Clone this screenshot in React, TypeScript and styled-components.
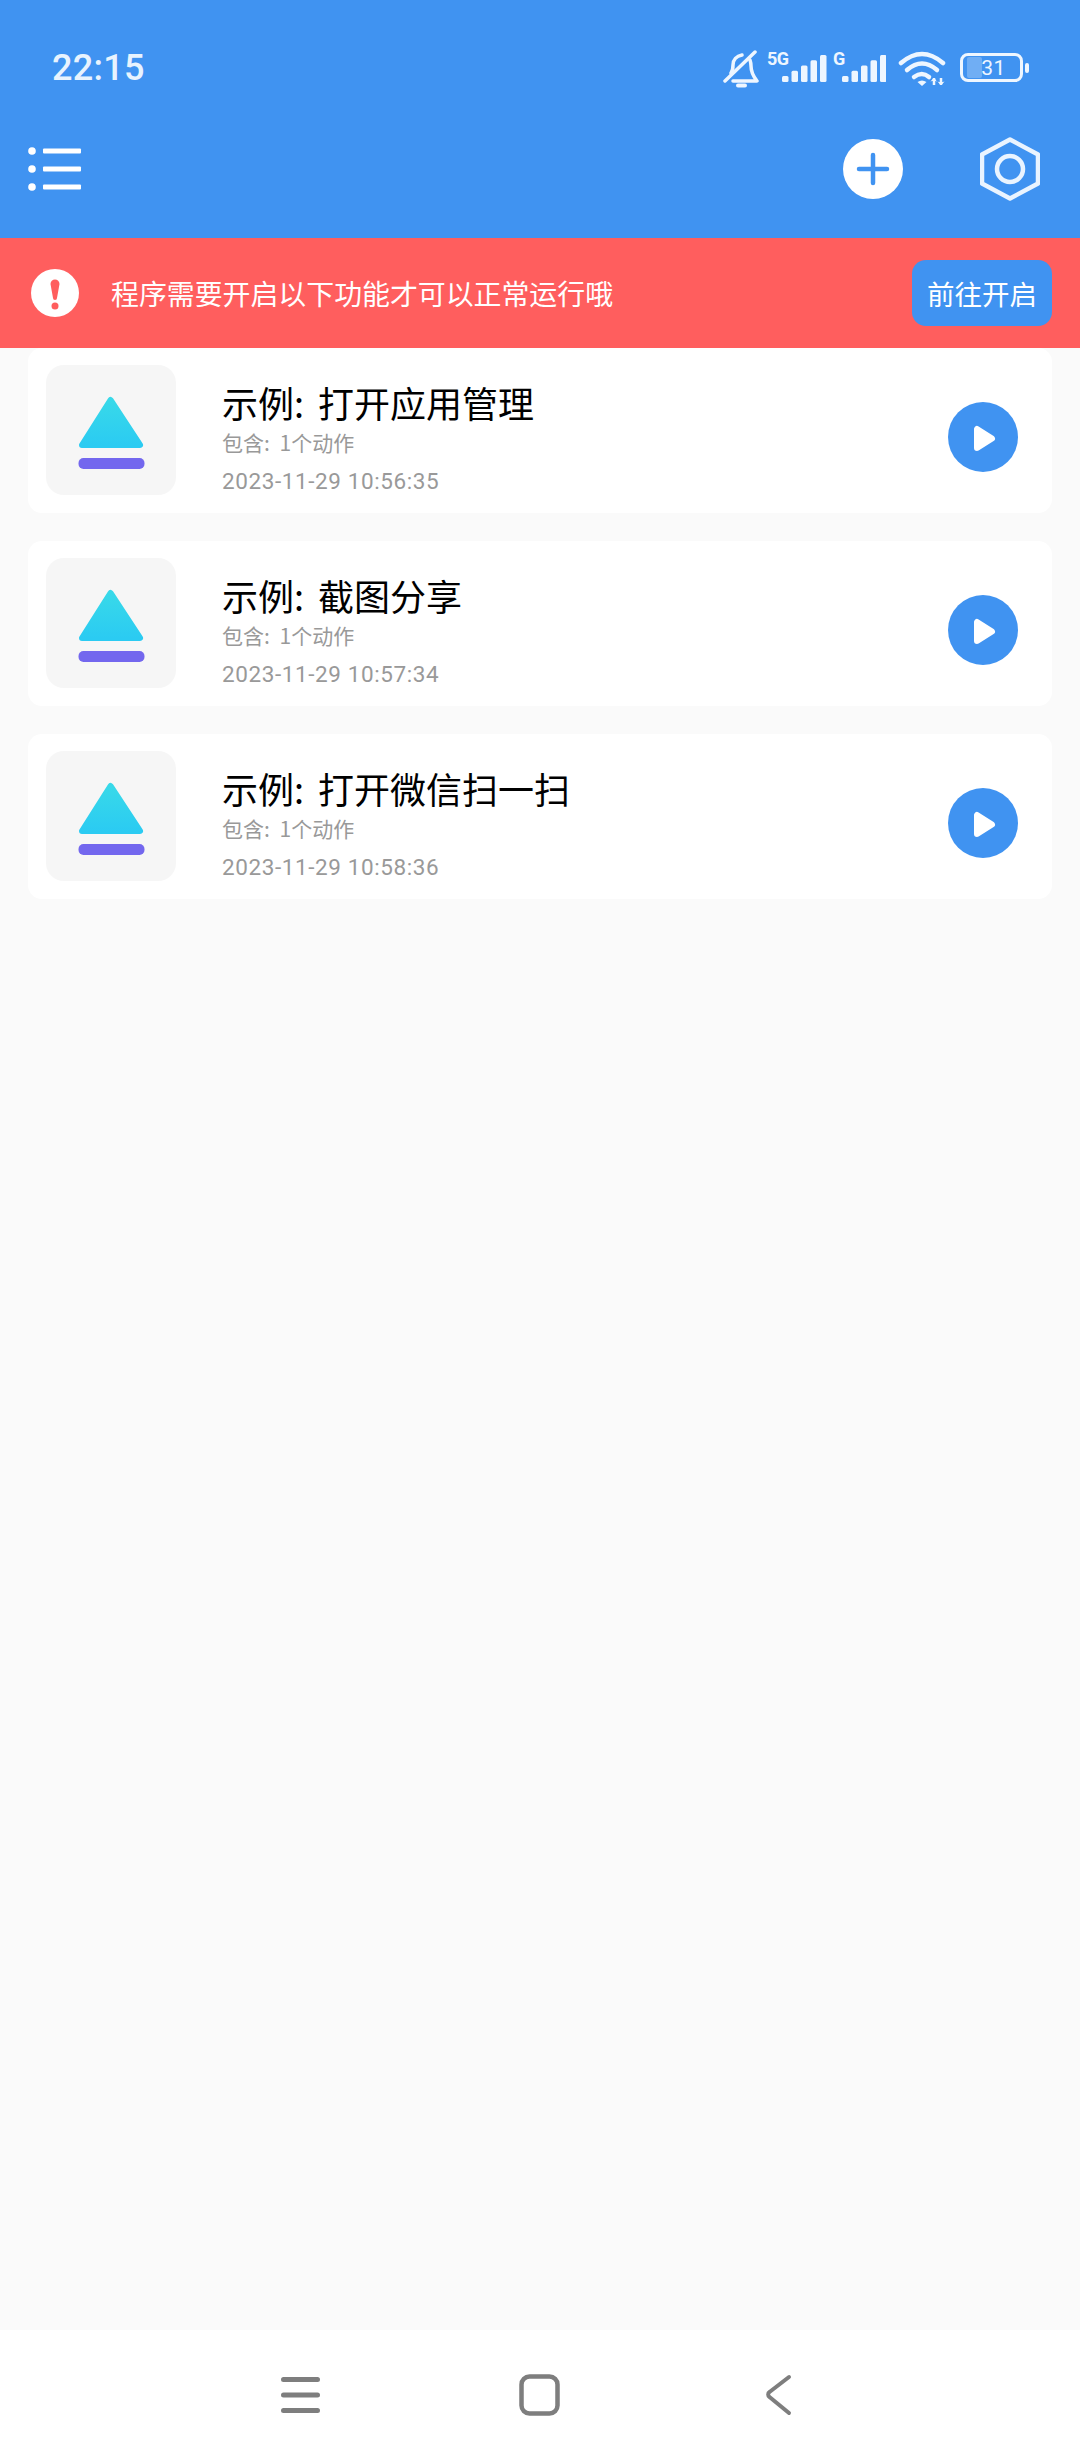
import React from "react";
import styled, { createGlobalStyle } from "styled-components";

const Global = createGlobalStyle`
  html, body { margin: 0; padding: 0; background: #fafafa; }
  #root { width: 1080px; height: 2460px; }
  * { box-sizing: border-box; }
`;

const cjk = `"Noto Sans CJK SC", "Noto Sans", sans-serif`;
const latin = `Roboto, "Noto Sans CJK SC", sans-serif`;

const Page = styled.div`
  width: 1080px;
  height: 2460px;
  display: flex;
  flex-direction: column;
  background: #fafafa;
  font-family: ${cjk};
`;
const Header = styled.header`
  height: 238px;
  background: #4093f1;
  display: flex;
  flex-direction: column;
`;
const StatusBar = styled.div`
  height: 120px;
  padding: 0 57px 0 52px;
  display: flex;
  align-items: flex-start;
  justify-content: space-between;
`;
const Clock = styled.span`
  margin-top: 47px;
  font: 500 36px/42px ${latin};
  letter-spacing: 0.3px;
  color: #e8f3fe;
`;
const StatusIcons = styled.div`
  margin-top: 46px;
  display: flex;
  align-items: flex-start;
  color: #eef6ff;
`;
const Toolbar = styled.div`
  flex: 1;
  display: flex;
  align-items: flex-start;
  padding: 19px 40px 0 27px;
`;
const Spacer = styled.div`
  flex: 1;
`;
const ToolIcon = styled.svg<{ $gap?: number; $lift?: number }>`
  display: block;
  margin-left: ${(p) => p.$gap ?? 0}px;
  margin-top: ${(p) => p.$lift ?? 0}px;
`;
const Banner = styled.div`
  height: 110px;
  background: #ff5e5e;
  display: flex;
  align-items: center;
  padding: 0 28px 0 31px;
`;
const BannerText = styled.span`
  margin-left: 32px;
  flex: 1;
  font-size: 27.9px;
  line-height: 36px;
  color: #fff;
`;
const GoButton = styled.button`
  width: 140px;
  height: 66px;
  border: 0;
  padding: 0;
  border-radius: 14px;
  background: #4093f1;
  color: #fff;
  font: 400 27.5px/36px ${cjk};
`;
const List = styled.main`
  flex: 1;
  padding: 0 28px;
  display: flex;
  flex-direction: column;
  gap: 28px;
`;
const Card = styled.article`
  height: 165px;
  background: #fff;
  border-radius: 14px;
  display: flex;
  align-items: flex-start;
  padding: 17px 0 0 18px;
`;
const Thumb = styled.div`
  width: 130px;
  height: 130px;
  flex: none;
  padding-top: 6px;
  border-radius: 18px;
  background: #f6f6f6;
  display: flex;
  align-items: center;
  justify-content: center;
`;
const Info = styled.div`
  margin-left: 46px;
  flex: 1;
  display: flex;
  flex-direction: column;
`;
const Title = styled.h3`
  margin: 17px 0 2px;
  font-size: 36px;
  font-weight: 400;
  line-height: 40px;
  word-spacing: 6px;
  color: #000;
`;
const Sub = styled.div`
  font-size: 21px;
  line-height: 36px;
  word-spacing: 5px;
  color: #999;
`;
const DateText = styled.div`
  margin-top: 3px;
  font: 400 22.5px/36px ${latin};
  letter-spacing: 0.6px;
  color: #999;
`;
const PlayWrap = styled.div`
  flex: none;
  margin: 37px 34px 0 0;
  display: flex;
`;
const NavBar = styled.nav`
  height: 130px;
  background: #fff;
  display: flex;
  align-items: flex-start;
  padding: 44px 0 0 281px;
`;
const NavIcon = styled.svg<{ $gap?: number }>`
  display: block;
  margin-left: ${(p) => p.$gap ?? 0}px;
`;
const BellIcon = styled.svg`
  flex: none;
  margin-top: 4px;
`;
const SignalIcon = styled.svg<{ $gap: number }>`
  flex: none;
  margin: -6px 0 0 ${(p) => p.$gap}px;
`;
const WifiIcon = styled.svg`
  flex: none;
  margin: 3px 0 0 12px;
`;
const BatteryBody = styled.div`
  position: relative;
  width: 63px;
  height: 29px;
  margin: 7px 0 0 14px;
  padding-left: 4px;
  border: 3px solid currentColor;
  border-radius: 8px;
  display: flex;
  align-items: center;
  justify-content: center;
  font: 400 21px/24px ${latin};
  letter-spacing: 0.5px;
  color: #eef6ff;
  &::before {
    content: "";
    position: absolute;
    left: 4px;
    top: 1px;
    bottom: 1px;
    width: 15px;
    background: rgba(255, 255, 255, 0.25);
    border-radius: 2px;
  }
  &::after {
    content: "";
    position: absolute;
    right: -9px;
    top: 7px;
    width: 4px;
    height: 10px;
    background: currentColor;
    border-radius: 2px;
  }
`;

const Bell = () => (
  <BellIcon width="36" height="38" viewBox="0 0 36 38" fill="none" stroke="currentColor" strokeWidth="3.500" strokeLinecap="round" strokeLinejoin="round">
    <path d="M2 31 32 2" />
    <path d="M8 23c1.500-2 2-4 2-8 0-5 3.500-9 9-10M27 10c.700 2 1 3.500 1 6 0 6 2 10 6 15H10" />
    <path d="M15 35.500h7" strokeWidth="4" />
  </BellIcon>
);

const Signal = ({ label, width, labelX, barsX, gap }: { label: string; width: number; labelX: number; barsX: number; gap: number }) => (
  <SignalIcon $gap={gap} width={width} height="46" viewBox={`0 -10 ${width} 46`} fill="currentColor">
    <text x={labelX} y="15" fontFamily="Roboto, sans-serif" fontWeight="700" fontSize="18" letterSpacing="-0.500">{label}</text>
    {[0, 1, 2, 3, 4].map((i) => (
      <rect key={i} x={barsX + i * 9.5} y={32 - (6 + i * 5.25)} width="6.500" height={6 + i * 5.25} rx="1.500" />
    ))}
  </SignalIcon>
);

const Wifi = () => (
  <WifiIcon width="48" height="38" viewBox="0 0 48 38" fill="none" stroke="currentColor" strokeWidth="4.500" strokeLinecap="round">
    <path d="M3 14Q24 -4 45 14" />
    <path d="M9 21Q24 8 39 21" />
    <path d="M16 28Q24 22 31 28" />
    <path d="M24 37 19.500 33Q24 30 28.500 33Z" fill="currentColor" stroke="none" />
    <path d="M36 29v7M43 29v7" strokeWidth="2.500" strokeLinecap="butt" />
    <path d="M33.500 32l2.500-3 2 3M40.500 33l2.500 3 2.500-3" fill="currentColor" strokeWidth="1" />
  </WifiIcon>
);

const AppGlyph = () => (
  <svg width="67" height="74" viewBox="0 0 67 74">
    <defs>
      <linearGradient id="tri" x1="0" y1="0" x2="0" y2="1">
        <stop offset="0" stopColor="#38d9e9" />
        <stop offset="1" stopColor="#2bcbf2" />
      </linearGradient>
    </defs>
    <polygon points="32.500,4 62,49 4,49" fill="url(#tri)" stroke="url(#tri)" strokeWidth="6" strokeLinejoin="round" />
    <rect x="0.500" y="62" width="66" height="11" rx="5" fill="#7367ee" />
  </svg>
);

const PlayIcon = () => (
  <svg width="70" height="70" viewBox="0 0 70 70">
    <circle cx="35" cy="35" r="35" fill="#4093f1" />
    <polygon points="29,27 29,46 44,36.500" fill="#fff" stroke="#fff" strokeWidth="6" strokeLinejoin="round" />
  </svg>
);

const items = [
  { title: "示例: 打开应用管理", time: "2023-11-29 10:56:35" },
  { title: "示例: 截图分享", time: "2023-11-29 10:57:34" },
  { title: "示例: 打开微信扫一扫", time: "2023-11-29 10:58:36" },
];

export default function App() {
  return (
    <Page>
      <Global />
      <Header>
        <StatusBar>
          <Clock>22:15</Clock>
          <StatusIcons>
            <Bell />
            <Signal label="5G" width={60} labelX={0} barsX={15} gap={8} />
            <Signal label="G" width={54} labelX={1} barsX={10} gap={5} />
            <Wifi />
            <BatteryBody>31</BatteryBody>
          </StatusIcons>
        </StatusBar>
        <Toolbar>
          <ToolIcon $lift={6} width="56" height="48" viewBox="0 0 56 48" fill="#fff">
            <circle cx="5" cy="6" r="3.800" />
            <circle cx="5" cy="24" r="3.800" />
            <circle cx="5" cy="42" r="3.800" />
            <rect x="16" y="3.500" width="38" height="5" rx="1" />
            <rect x="16" y="21.500" width="38" height="5" rx="1" />
            <rect x="16" y="39.500" width="38" height="5" rx="1" />
          </ToolIcon>
          <Spacer />
          <ToolIcon width="60" height="60" viewBox="0 0 60 60">
            <circle cx="30" cy="30" r="30" fill="#fff" />
            <path d="M30 16v28M16 30h28" stroke="#4093f1" strokeWidth="4.500" strokeLinecap="round" />
          </ToolIcon>
          <ToolIcon $gap={77} $lift={-2} width="60" height="64" viewBox="0 0 60 64" fill="none" stroke="#eaf4ff">
            <path d="M30 2.500 58 17.500V46.500L30 61.500 2 46.500V17.500Z" strokeWidth="4.500" strokeLinejoin="round" />
            <circle cx="30" cy="32" r="13" strokeWidth="4.500" />
          </ToolIcon>
        </Toolbar>
      </Header>
      <Banner>
        <svg width="48" height="48" viewBox="0 0 48 48">
          <circle cx="24" cy="24" r="24" fill="#fff" />
          <path d="M19.500 15a4.500 4.500 0 0 1 9 0l-2.500 14a2 2 0 0 1-4 0Z" fill="#ff5e5e" />
          <circle cx="24" cy="37" r="3.500" fill="#ff5e5e" />
        </svg>
        <BannerText>程序需要开启以下功能才可以正常运行哦</BannerText>
        <GoButton>前往开启</GoButton>
      </Banner>
      <List>
        {items.map((it) => (
          <Card key={it.time}>
            <Thumb>
              <AppGlyph />
            </Thumb>
            <Info>
              <Title>{it.title}</Title>
              <Sub>包含: 1个动作</Sub>
              <DateText>{it.time}</DateText>
            </Info>
            <PlayWrap>
              <PlayIcon />
            </PlayWrap>
          </Card>
        ))}
      </List>
      <NavBar>
        <NavIcon width="39" height="42" viewBox="0 0 39 42" stroke="#7e7e7e" strokeWidth="5" strokeLinecap="round">
          <path d="M2.500 5.500h34M2.500 21h34M2.500 36.500h34" />
        </NavIcon>
        <NavIcon $gap={199} width="41" height="42" viewBox="0 0 41 42" fill="none" stroke="#7e7e7e" strokeWidth="4.500">
          <rect x="2.500" y="2.500" width="36" height="37" rx="8" />
        </NavIcon>
        <NavIcon $gap={206} width="26" height="42" viewBox="0 0 26 42" fill="none" stroke="#7e7e7e" strokeWidth="4" strokeLinecap="round" strokeLinejoin="round">
          <path d="M23 3 3.500 18a3 3 0 0 0 0 5L23 39" />
        </NavIcon>
      </NavBar>
    </Page>
  );
}
